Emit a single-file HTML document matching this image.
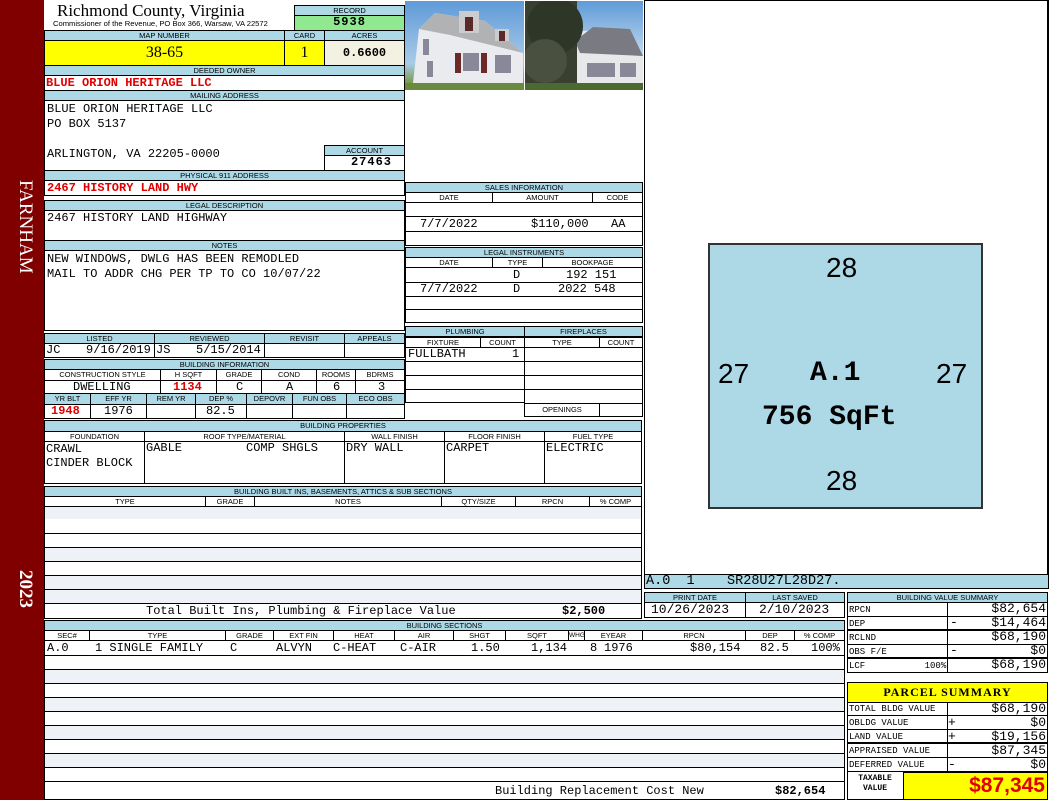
<!DOCTYPE html>
<html><head><meta charset="utf-8"><style>
*{margin:0;padding:0;box-sizing:border-box}
body{width:1050px;height:800px;background:#fff;position:relative;overflow:hidden;font-family:"Liberation Sans",sans-serif}
div{position:absolute}
.h{background:#add8e6;border:1px solid #000;font-size:7.5px;text-align:center;line-height:9px;color:#000;white-space:nowrap;overflow:hidden}
.c{border:1px solid #000;background:#fff}
.m{font-family:"Liberation Mono",monospace;font-size:12px;line-height:13px;white-space:pre;color:#000}
.r{color:#e00000;font-weight:bold}
.alt{background:#eef2f7}
.ln{height:1px;background:#000}
.vl{width:1px;background:#000}
</style></head><body>
<!-- sidebar -->
<div style="left:0;top:0;width:44px;height:800px;background:#800000"></div>
<div style="left:8px;top:180px;width:28px;height:130px;color:#fff;font-family:'Liberation Serif',serif;font-size:19px;writing-mode:vertical-rl">FARNHAM</div>
<div style="left:8px;top:570px;width:28px;height:50px;color:#fff;font-family:'Liberation Serif',serif;font-size:19px;font-weight:bold;writing-mode:vertical-rl">2023</div>

<!-- header -->
<div style="left:57px;top:1px;font-family:'Liberation Serif',serif;font-size:17px;line-height:20px">Richmond County, Virginia</div>
<div style="left:53px;top:19px;font-size:7.6px;line-height:9px;white-space:nowrap">Commissioner of the Revenue, PO Box 366, Warsaw, VA 22572</div>
<div class="h" style="left:294px;top:5px;width:111px;height:11px">RECORD</div>
<div class="m" style="left:294px;top:15px;width:111px;height:16px;background:#90e890;border:1px solid #000;text-align:center;font-weight:bold;letter-spacing:1px">5938</div>
<div class="h" style="left:44px;top:30px;width:241px;height:11px">MAP NUMBER</div>
<div class="h" style="left:284px;top:30px;width:41px;height:11px">CARD</div>
<div class="h" style="left:324px;top:30px;width:81px;height:11px">ACRES</div>
<div style="left:44px;top:40px;width:241px;height:26px;background:#ffff00;border:1px solid #000;font-family:'Liberation Serif',serif;font-size:16px;text-align:center;line-height:24px">38-65</div>
<div style="left:284px;top:40px;width:41px;height:26px;background:#ffff00;border:1px solid #000;font-family:'Liberation Serif',serif;font-size:16px;text-align:center;line-height:24px">1</div>
<div class="m" style="left:324px;top:40px;width:81px;height:26px;background:#f3f1e2;border:1px solid #000;text-align:center;line-height:24px;font-weight:bold">0.6600</div>
<div class="h" style="left:44px;top:65px;width:361px;height:11px">DEEDED OWNER</div>
<div class="c" style="left:44px;top:75px;width:361px;height:16px"></div>
<div class="m r" style="left:46px;top:77px">BLUE ORION HERITAGE LLC</div>
<div class="h" style="left:44px;top:90px;width:361px;height:11px">MAILING ADDRESS</div>
<div class="c" style="left:44px;top:100px;width:361px;height:71px"></div>
<div class="m" style="left:47px;top:102px;line-height:15px">BLUE ORION HERITAGE LLC
PO BOX 5137

ARLINGTON, VA 22205-0000</div>
<div class="h" style="left:324px;top:145px;width:81px;height:11px">ACCOUNT</div>
<div class="m" style="left:324px;top:155px;width:81px;height:16px;border:1px solid #000;text-align:right;padding-right:12px;font-weight:bold;letter-spacing:1px">27463</div>
<div class="h" style="left:44px;top:170px;width:361px;height:11px">PHYSICAL 911 ADDRESS</div>
<div class="c" style="left:44px;top:180px;width:361px;height:16px"></div>
<div class="m r" style="left:47px;top:182px">2467 HISTORY LAND HWY</div>
<div class="h" style="left:44px;top:200px;width:361px;height:11px">LEGAL DESCRIPTION</div>
<div class="c" style="left:44px;top:210px;width:361px;height:31px"></div>
<div class="m" style="left:47px;top:212px">2467 HISTORY LAND HIGHWAY</div>
<div class="h" style="left:44px;top:240px;width:361px;height:11px">NOTES</div>
<div class="c" style="left:44px;top:250px;width:361px;height:81px"></div>
<div class="m" style="left:47px;top:252px;line-height:15px">NEW WINDOWS, DWLG HAS BEEN REMODLED
MAIL TO ADDR CHG PER TP TO CO 10/07/22</div>

<!-- listed -->
<div class="h" style="left:44px;top:333px;width:111px;height:11px">LISTED</div>
<div class="h" style="left:154px;top:333px;width:111px;height:11px">REVIEWED</div>
<div class="h" style="left:264px;top:333px;width:81px;height:11px">REVISIT</div>
<div class="h" style="left:344px;top:333px;width:61px;height:11px">APPEALS</div>
<div class="c" style="left:44px;top:343px;width:111px;height:15px"></div>
<div class="c" style="left:154px;top:343px;width:111px;height:15px"></div>
<div class="c" style="left:264px;top:343px;width:81px;height:15px"></div>
<div class="c" style="left:344px;top:343px;width:61px;height:15px"></div>
<div class="m" style="left:46px;top:344px">JC</div>
<div class="m" style="left:86px;top:344px">9/16/2019</div>
<div class="m" style="left:156px;top:344px">JS</div>
<div class="m" style="left:196px;top:344px">5/15/2014</div>

<!-- building info -->
<div class="h" style="left:44px;top:359px;width:361px;height:11px">BUILDING INFORMATION</div>
<div class="h" style="left:44px;top:369px;width:117px;height:12px;background:#fff">CONSTRUCTION STYLE</div>
<div class="h" style="left:160px;top:369px;width:57px;height:12px;background:#fff">H SQFT</div>
<div class="h" style="left:216px;top:369px;width:46px;height:12px;background:#fff">GRADE</div>
<div class="h" style="left:261px;top:369px;width:56px;height:12px;background:#fff">COND</div>
<div class="h" style="left:316px;top:369px;width:40px;height:12px;background:#fff">ROOMS</div>
<div class="h" style="left:355px;top:369px;width:50px;height:12px;background:#fff">BDRMS</div>
<div class="c" style="left:44px;top:380px;width:117px;height:14px"></div>
<div class="c" style="left:160px;top:380px;width:57px;height:14px"></div>
<div class="c" style="left:216px;top:380px;width:46px;height:14px"></div>
<div class="c" style="left:261px;top:380px;width:56px;height:14px"></div>
<div class="c" style="left:316px;top:380px;width:40px;height:14px"></div>
<div class="c" style="left:355px;top:380px;width:50px;height:14px"></div>
<div class="m" style="left:73px;top:381px">DWELLING</div>
<div class="m r" style="left:173px;top:381px">1134</div>
<div class="m" style="left:236px;top:381px">C</div>
<div class="m" style="left:286px;top:381px">A</div>
<div class="m" style="left:333px;top:381px">6</div>
<div class="m" style="left:378px;top:381px">3</div>
<div class="h" style="left:44px;top:393px;width:47px;height:12px">YR BLT</div>
<div class="h" style="left:90px;top:393px;width:57px;height:12px">EFF YR</div>
<div class="h" style="left:146px;top:393px;width:50px;height:12px">REM YR</div>
<div class="h" style="left:195px;top:393px;width:52px;height:12px">DEP %</div>
<div class="h" style="left:246px;top:393px;width:47px;height:12px">DEPOVR</div>
<div class="h" style="left:292px;top:393px;width:55px;height:12px">FUN OBS</div>
<div class="h" style="left:346px;top:393px;width:59px;height:12px">ECO OBS</div>
<div class="c" style="left:44px;top:404px;width:47px;height:15px"></div>
<div class="c" style="left:90px;top:404px;width:57px;height:15px"></div>
<div class="c" style="left:146px;top:404px;width:50px;height:15px"></div>
<div class="c" style="left:195px;top:404px;width:52px;height:15px"></div>
<div class="c" style="left:246px;top:404px;width:47px;height:15px"></div>
<div class="c" style="left:292px;top:404px;width:55px;height:15px"></div>
<div class="c" style="left:346px;top:404px;width:59px;height:15px"></div>
<div class="m r" style="left:51px;top:405px">1948</div>
<div class="m" style="left:104px;top:405px">1976</div>
<div class="m" style="left:206px;top:405px">82.5</div>

<!-- building properties -->
<div class="h" style="left:44px;top:420px;width:598px;height:12px">BUILDING PROPERTIES</div>
<div class="c" style="left:44px;top:431px;width:598px;height:53px"></div>
<div class="h" style="left:44px;top:431px;width:101px;height:11px;background:#fff">FOUNDATION</div>
<div class="h" style="left:144px;top:431px;width:201px;height:11px;background:#fff">ROOF TYPE/MATERIAL</div>
<div class="h" style="left:344px;top:431px;width:101px;height:11px;background:#fff">WALL FINISH</div>
<div class="h" style="left:444px;top:431px;width:101px;height:11px;background:#fff">FLOOR FINISH</div>
<div class="h" style="left:544px;top:431px;width:98px;height:11px;background:#fff">FUEL TYPE</div>
<div class="vl" style="left:144px;top:441px;height:42px"></div>
<div class="vl" style="left:344px;top:441px;height:42px"></div>
<div class="vl" style="left:444px;top:441px;height:42px"></div>
<div class="vl" style="left:544px;top:441px;height:42px"></div>
<div class="m" style="left:46px;top:442px;line-height:14px">CRAWL
CINDER BLOCK</div>
<div class="m" style="left:146px;top:442px">GABLE</div>
<div class="m" style="left:246px;top:442px">COMP SHGLS</div>
<div class="m" style="left:346px;top:442px">DRY WALL</div>
<div class="m" style="left:446px;top:442px">CARPET</div>
<div class="m" style="left:546px;top:442px">ELECTRIC</div>

<!-- built ins -->
<div class="h" style="left:44px;top:486px;width:598px;height:11px">BUILDING BUILT INS, BASEMENTS, ATTICS &amp; SUB SECTIONS</div>
<div class="c" style="left:44px;top:496px;width:598px;height:123px"></div>
<div class="h" style="left:44px;top:496px;width:162px;height:11px;background:#fff">TYPE</div>
<div class="h" style="left:205px;top:496px;width:50px;height:11px;background:#fff">GRADE</div>
<div class="h" style="left:254px;top:496px;width:188px;height:11px;background:#fff">NOTES</div>
<div class="h" style="left:441px;top:496px;width:75px;height:11px;background:#fff">QTY/SIZE</div>
<div class="h" style="left:515px;top:496px;width:75px;height:11px;background:#fff">RPCN</div>
<div class="h" style="left:589px;top:496px;width:53px;height:11px;background:#fff">% COMP</div>
<div class="alt" style="left:45px;top:507px;width:596px;height:12px"></div>
<div class="ln" style="left:44px;top:533px;width:598px"></div>
<div class="ln" style="left:44px;top:547px;width:598px"></div>
<div class="alt" style="left:45px;top:548px;width:596px;height:13px"></div>
<div class="ln" style="left:44px;top:561px;width:598px"></div>
<div class="ln" style="left:44px;top:575px;width:598px"></div>
<div class="alt" style="left:45px;top:576px;width:596px;height:13px"></div>
<div class="ln" style="left:44px;top:589px;width:598px"></div>
<div class="alt" style="left:45px;top:590px;width:596px;height:13px"></div>
<div class="ln" style="left:44px;top:603px;width:598px"></div>
<div class="m" style="left:146px;top:605px">Total Built Ins, Plumbing &amp; Fireplace Value</div>
<div class="m" style="left:562px;top:605px;font-weight:bold">$2,500</div>

<!-- building sections -->
<div class="h" style="left:44px;top:620px;width:801px;height:11px">BUILDING SECTIONS</div>
<div class="c" style="left:44px;top:630px;width:801px;height:170px"></div>
<div class="h" style="left:44px;top:630px;width:46px;height:11px;background:#fff">SEC#</div>
<div class="h" style="left:89px;top:630px;width:137px;height:11px;background:#fff">TYPE</div>
<div class="h" style="left:225px;top:630px;width:49px;height:11px;background:#fff">GRADE</div>
<div class="h" style="left:273px;top:630px;width:61px;height:11px;background:#fff">EXT FIN</div>
<div class="h" style="left:333px;top:630px;width:62px;height:11px;background:#fff">HEAT</div>
<div class="h" style="left:394px;top:630px;width:60px;height:11px;background:#fff">AIR</div>
<div class="h" style="left:453px;top:630px;width:53px;height:11px;background:#fff">SHGT</div>
<div class="h" style="left:505px;top:630px;width:64px;height:11px;background:#fff">SQFT</div>
<div class="h" style="left:568px;top:630px;width:17px;height:11px;background:#fff;font-size:6.5px">WHGT</div>
<div class="h" style="left:584px;top:630px;width:59px;height:11px;background:#fff">EYEAR</div>
<div class="h" style="left:642px;top:630px;width:104px;height:11px;background:#fff">RPCN</div>
<div class="h" style="left:745px;top:630px;width:50px;height:11px;background:#fff">DEP</div>
<div class="h" style="left:794px;top:630px;width:51px;height:11px;background:#fff">% COMP</div>
<div class="m" style="left:47px;top:642px">A.0</div>
<div class="m" style="left:95px;top:642px">1 SINGLE FAMILY</div>
<div class="m" style="left:230px;top:642px">C</div>
<div class="m" style="left:276px;top:642px">ALVYN</div>
<div class="m" style="left:333px;top:642px">C-HEAT</div>
<div class="m" style="left:400px;top:642px">C-AIR</div>
<div class="m" style="left:471px;top:642px">1.50</div>
<div class="m" style="left:531px;top:642px">1,134</div>
<div class="m" style="left:590px;top:642px">8</div>
<div class="m" style="left:604px;top:642px">1976</div>
<div class="m" style="left:690px;top:642px">$80,154</div>
<div class="m" style="left:760px;top:642px">82.5</div>
<div class="m" style="left:811px;top:642px">100%</div>
<div class="ln" style="left:44px;top:655px;width:801px"></div>
<div class="ln" style="left:44px;top:669px;width:801px"></div>
<div class="alt" style="left:45px;top:670px;width:799px;height:13px"></div>
<div class="ln" style="left:44px;top:683px;width:801px"></div>
<div class="ln" style="left:44px;top:697px;width:801px"></div>
<div class="alt" style="left:45px;top:698px;width:799px;height:13px"></div>
<div class="ln" style="left:44px;top:711px;width:801px"></div>
<div class="ln" style="left:44px;top:725px;width:801px"></div>
<div class="alt" style="left:45px;top:726px;width:799px;height:13px"></div>
<div class="ln" style="left:44px;top:739px;width:801px"></div>
<div class="ln" style="left:44px;top:753px;width:801px"></div>
<div class="alt" style="left:45px;top:754px;width:799px;height:13px"></div>
<div class="ln" style="left:44px;top:767px;width:801px"></div>
<div class="ln" style="left:44px;top:781px;width:801px"></div>
<div class="m" style="left:495px;top:785px">Building Replacement Cost New</div>
<div class="m" style="left:775px;top:785px;font-weight:bold">$82,654</div>

<!-- photos -->
<div style="left:405px;top:1px;width:119px;height:89px;background:linear-gradient(#5f9ad8,#a9cbe8 70%,#7a9a50 92%);overflow:hidden">
<svg width="119" height="89"><polygon points="8,82 14,28 30,12 80,20 118,52 118,82" fill="#e9ebee"/><polygon points="30,12 80,20 118,52 45,34 14,28" fill="#b0b2b4"/><rect x="54" y="10" width="20" height="22" fill="#ccc"/><rect x="60" y="16" width="8" height="14" fill="#5a2a2a"/><rect x="90" y="28" width="14" height="12" fill="#ccc"/><rect x="94" y="30" width="6" height="10" fill="#5a2a2a"/><rect x="50" y="52" width="6" height="20" fill="#6b2a2a"/><rect x="58" y="52" width="16" height="18" fill="#889"/><rect x="76" y="52" width="6" height="20" fill="#6b2a2a"/><rect x="90" y="54" width="16" height="18" fill="#889"/><rect x="18" y="38" width="6" height="16" fill="#889"/><rect x="22" y="60" width="6" height="16" fill="#889"/><rect x="0" y="82" width="119" height="7" fill="#6a8a40"/></svg></div>
<div style="left:525px;top:1px;width:118px;height:89px;background:linear-gradient(#5f9ad8,#c0d8ee 60%,#6a8a40 92%);overflow:hidden">
<svg width="118" height="89"><polygon points="40,60 55,30 100,28 118,55 118,82 40,82" fill="#e6e8ea"/><polygon points="50,40 68,26 105,28 118,55 55,52" fill="#7a7a82"/><rect x="0" y="0" width="52" height="89" fill="#3a4030"/><circle cx="30" cy="25" r="28" fill="#2e3628"/><circle cx="20" cy="60" r="22" fill="#4a5040"/><rect x="62" y="62" width="28" height="14" fill="#889"/><rect x="95" y="62" width="16" height="14" fill="#889"/><rect x="0" y="82" width="118" height="7" fill="#4a6a30"/></svg></div>

<!-- right panel -->
<div style="left:644px;top:0;width:405px;height:575px;border:1px solid #000;border-right:2px solid #000;background:#fff"></div>
<div style="left:708px;top:243px;width:275px;height:266px;background:#add8e6;border:2px solid #333"></div>
<div style="left:826px;top:252px;font-size:28px">28</div>
<div style="left:826px;top:465px;font-size:28px">28</div>
<div style="left:718px;top:358px;font-size:28px">27</div>
<div style="left:936px;top:358px;font-size:28px">27</div>
<div style="left:810px;top:358px;font-size:28px;font-family:'Liberation Mono',monospace;font-weight:bold">A.1</div>
<div style="left:762px;top:402px;font-size:28px;font-family:'Liberation Mono',monospace;font-weight:bold">756 SqFt</div>
<div class="m" style="left:644px;top:574px;width:405px;height:15px;background:#add8e6;border:1px solid #000;padding-left:1px;line-height:13px;font-size:13.5px">A.0  1    SR28U27L28D27.</div>

<!-- sales -->
<div class="h" style="left:405px;top:182px;width:238px;height:11px">SALES INFORMATION</div>
<div class="c" style="left:405px;top:192px;width:238px;height:54px"></div>
<div class="h" style="left:405px;top:192px;width:88px;height:11px;background:#fff">DATE</div>
<div class="h" style="left:492px;top:192px;width:101px;height:11px;background:#fff">AMOUNT</div>
<div class="h" style="left:592px;top:192px;width:51px;height:11px;background:#fff">CODE</div>
<div class="ln" style="left:405px;top:216px;width:238px"></div>
<div class="ln" style="left:405px;top:231px;width:238px"></div>
<div class="m" style="left:420px;top:218px">7/7/2022</div>
<div class="m" style="left:531px;top:218px">$110,000</div>
<div class="m" style="left:611px;top:218px">AA</div>
<div class="h" style="left:405px;top:247px;width:238px;height:11px">LEGAL INSTRUMENTS</div>
<div class="c" style="left:405px;top:257px;width:238px;height:66px"></div>
<div class="h" style="left:405px;top:257px;width:88px;height:11px;background:#fff">DATE</div>
<div class="h" style="left:492px;top:257px;width:51px;height:11px;background:#fff">TYPE</div>
<div class="h" style="left:542px;top:257px;width:101px;height:11px;background:#fff">BOOKPAGE</div>
<div class="ln" style="left:405px;top:282px;width:238px"></div>
<div class="ln" style="left:405px;top:296px;width:238px"></div>
<div class="ln" style="left:405px;top:309px;width:238px"></div>
<div class="m" style="left:513px;top:269px">D</div>
<div class="m" style="left:566px;top:269px">192 151</div>
<div class="m" style="left:420px;top:283px">7/7/2022</div>
<div class="m" style="left:513px;top:283px">D</div>
<div class="m" style="left:558px;top:283px">2022 548</div>

<!-- plumbing -->
<div class="h" style="left:405px;top:326px;width:120px;height:11px">PLUMBING</div>
<div class="h" style="left:524px;top:326px;width:119px;height:11px">FIREPLACES</div>
<div class="h" style="left:405px;top:337px;width:76px;height:11px;background:#fff">FIXTURE</div>
<div class="h" style="left:480px;top:337px;width:45px;height:11px;background:#fff">COUNT</div>
<div class="h" style="left:524px;top:337px;width:76px;height:11px;background:#fff">TYPE</div>
<div class="h" style="left:599px;top:337px;width:44px;height:11px;background:#fff">COUNT</div>
<div class="c" style="left:405px;top:347px;width:120px;height:56px"></div>
<div class="c" style="left:524px;top:347px;width:119px;height:70px"></div>
<div class="ln" style="left:406px;top:361px;width:236px"></div>
<div class="ln" style="left:406px;top:375px;width:236px"></div>
<div class="ln" style="left:406px;top:389px;width:236px"></div>
<div class="ln" style="left:525px;top:403px;width:117px"></div>
<div class="vl" style="left:599px;top:403px;height:14px"></div>
<div style="left:525px;top:405px;width:74px;font-size:7.5px;text-align:center">OPENINGS</div>
<div class="m" style="left:408px;top:348px">FULLBATH</div>
<div class="m" style="left:512px;top:348px">1</div>

<!-- print date -->
<div class="h" style="left:644px;top:592px;width:102px;height:11px">PRINT DATE</div>
<div class="h" style="left:745px;top:592px;width:100px;height:11px">LAST SAVED</div>
<div class="c" style="left:644px;top:602px;width:102px;height:16px"></div>
<div class="c" style="left:745px;top:602px;width:100px;height:16px"></div>
<div class="m" style="left:651px;top:603px;font-size:13px">10/26/2023</div>
<div class="m" style="left:759px;top:603px;font-size:13px">2/10/2023</div>

<!-- value summary -->
<div class="h" style="left:847px;top:592px;width:201px;height:11px">BUILDING VALUE SUMMARY</div>
<div class="c" style="left:847px;top:602px;width:201px;height:71px"></div>
<div class="vl" style="left:947px;top:602px;height:70px"></div>
<div class="ln" style="left:848px;top:616px;width:200px"></div>
<div class="ln" style="left:848px;top:629px;width:200px;height:2px"></div>
<div class="ln" style="left:848px;top:644px;width:200px"></div>
<div class="ln" style="left:848px;top:657px;width:200px;height:2px"></div>
<div class="m" style="left:849px;top:603px;font-size:9px;line-height:14px">RPCN
DEP
RCLND
OBS F/E
LCF           100%</div>
<div class="m" style="left:950px;top:602px;width:96px;text-align:right;font-size:13px;line-height:14px">$82,654
$14,464
$68,190
$0
$68,190</div>
<div class="m" style="left:950px;top:616px;font-size:13px">-</div>
<div class="m" style="left:950px;top:644px;font-size:13px">-</div>

<!-- parcel summary -->
<div style="left:847px;top:682px;width:201px;height:21px;background:#ffff00;border:1px solid #000;font-family:'Liberation Serif',serif;font-weight:bold;font-size:12px;text-align:center;line-height:19px;letter-spacing:1px">PARCEL SUMMARY</div>
<div class="c" style="left:847px;top:702px;width:201px;height:98px"></div>
<div class="vl" style="left:947px;top:702px;height:70px"></div>
<div class="ln" style="left:848px;top:715px;width:200px"></div>
<div class="ln" style="left:848px;top:729px;width:200px"></div>
<div class="ln" style="left:848px;top:742px;width:200px;height:2px"></div>
<div class="ln" style="left:848px;top:757px;width:200px"></div>
<div class="ln" style="left:848px;top:771px;width:200px"></div>
<div class="m" style="left:849px;top:702px;font-size:9px;line-height:14px">TOTAL BLDG VALUE
OBLDG VALUE
LAND VALUE
APPRAISED VALUE
DEFERRED VALUE</div>
<div class="m" style="left:950px;top:702px;width:96px;text-align:right;font-size:13px;line-height:14px">$68,190
$0
$19,156
$87,345
$0</div>
<div class="m" style="left:948px;top:716px;font-size:13px;line-height:14px">+
+

-</div>
<div style="left:903px;top:772px;width:145px;height:28px;background:#ffff00;border:1px solid #000"></div>
<div class="m" style="left:850px;top:774px;width:50px;font-size:8px;line-height:10px;text-align:center;font-weight:bold">TAXABLE
VALUE</div>
<div style="left:905px;top:773px;width:140px;text-align:right;color:#e00000;font-weight:bold;font-size:21px;line-height:26px">$87,345</div>
</body></html>
